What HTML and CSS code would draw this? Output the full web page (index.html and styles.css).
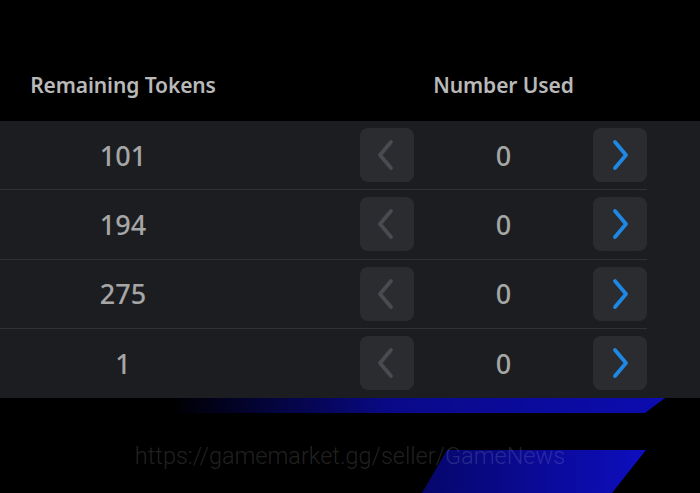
FILE: index.html
```html
<!DOCTYPE html>
<html>
<head>
<meta charset="utf-8">
<link rel="stylesheet" href="styles.css">
</head>
<body>
<div class="page">
  <div class="head">
    <div class="col-a">Remaining Tokens</div>
    <div class="col-gap"></div>
    <div class="col-b">Number Used</div>
  </div>
  <div class="table">
    <div class="row">
      <div class="col-a num">101</div>
      <div class="col-gap"></div>
      <div class="col-b stepper">
        <button class="btn"><svg viewBox="0 0 54 54" width="54" height="54"><path class="chev-off" d="M31 14 L20 27 L31 40"/></svg></button>
        <span class="num">0</span>
        <button class="btn"><svg viewBox="0 0 54 54" width="54" height="54"><path class="chev-on" d="M22 14 L33 27 L22 40"/></svg></button>
      </div>
    </div>
    <div class="row">
      <div class="col-a num">194</div>
      <div class="col-gap"></div>
      <div class="col-b stepper">
        <button class="btn"><svg viewBox="0 0 54 54" width="54" height="54"><path class="chev-off" d="M31 14 L20 27 L31 40"/></svg></button>
        <span class="num">0</span>
        <button class="btn"><svg viewBox="0 0 54 54" width="54" height="54"><path class="chev-on" d="M22 14 L33 27 L22 40"/></svg></button>
      </div>
    </div>
    <div class="row">
      <div class="col-a num">275</div>
      <div class="col-gap"></div>
      <div class="col-b stepper">
        <button class="btn"><svg viewBox="0 0 54 54" width="54" height="54"><path class="chev-off" d="M31 14 L20 27 L31 40"/></svg></button>
        <span class="num">0</span>
        <button class="btn"><svg viewBox="0 0 54 54" width="54" height="54"><path class="chev-on" d="M22 14 L33 27 L22 40"/></svg></button>
      </div>
    </div>
    <div class="row last">
      <div class="col-a num">1</div>
      <div class="col-gap"></div>
      <div class="col-b stepper">
        <button class="btn"><svg viewBox="0 0 54 54" width="54" height="54"><path class="chev-off" d="M31 14 L20 27 L31 40"/></svg></button>
        <span class="num">0</span>
        <button class="btn"><svg viewBox="0 0 54 54" width="54" height="54"><path class="chev-on" d="M22 14 L33 27 L22 40"/></svg></button>
      </div>
    </div>
  </div>
  <svg class="deco" viewBox="0 0 700 95" width="700" height="95">
    <defs>
      <linearGradient id="g1" x1="170" y1="0" x2="665" y2="0" gradientUnits="userSpaceOnUse">
        <stop offset="0" stop-color="#0a0a90" stop-opacity="0"/>
        <stop offset="0.45" stop-color="#0a0a98" stop-opacity="0.9"/>
        <stop offset="1" stop-color="#0c0cb0"/>
      </linearGradient>
      <linearGradient id="g2" x1="420" y1="0" x2="648" y2="0" gradientUnits="userSpaceOnUse">
        <stop offset="0" stop-color="#06066a"/>
        <stop offset="1" stop-color="#0e0ec0"/>
      </linearGradient>
    </defs>
    <polygon points="170,0 665,0 645,15 170,15" fill="url(#g1)"/>
    <polygon points="447,52 646,52 612,95 422,95" fill="url(#g2)"/>
  </svg>
  <div class="watermark">https://gamemarket.gg/seller/GameNews</div>
</div>
</body>
</html>
```

FILE: styles.css
```css
html, body {
  margin: 0;
  padding: 0;
  background: #000;
}
.page {
  position: relative;
  width: 700px;
  height: 493px;
  overflow: hidden;
  background: #000;
  font-family: "Noto Sans", "Open Sans", sans-serif;
}
.head {
  height: 121px;
  display: flex;
  align-items: flex-end;
  box-sizing: border-box;
  padding-bottom: 22px;
  color: #b9b9b9;
  font-size: 21px;
  font-weight: 600;
  letter-spacing: -0.1px;
}
.col-a {
  width: 246px;
  text-align: center;
  flex: none;
}
.col-gap {
  width: 114px;
  flex: none;
}
.col-b {
  width: 287px;
  text-align: center;
  flex: none;
}
.table {
  background: #1c1d20;
  height: 277px;
  display: flex;
  flex-direction: column;
}
.row {
  display: flex;
  align-items: center;
  height: 69.25px;
  width: 647px;
  box-sizing: border-box;
  border-bottom: 1px solid #303135;
}
.row.last {
  border-bottom: none;
}
.num {
  color: #a6a6a6;
  font-size: 27px;
  font-weight: 500;
}
.stepper {
  display: flex;
  align-items: center;
  justify-content: space-between;
}
.btn {
  width: 54px;
  height: 54px;
  padding: 0;
  border: none;
  border-radius: 8px;
  background: #2b2c30;
  display: flex;
  align-items: center;
  justify-content: center;
}
.btn svg {
  display: block;
}
.chev-off, .chev-on {
  fill: none;
  stroke-width: 3.8;
  stroke-linecap: round;
  stroke-linejoin: round;
}
.chev-off {
  stroke: #4a4b50;
}
.chev-on {
  stroke: #1e88e5;
}
.deco {
  position: absolute;
  left: 0;
  top: 398px;
  display: block;
}
.watermark {
  position: absolute;
  left: 0;
  right: 0;
  top: 442px;
  text-align: center;
  font-family: Roboto, "Noto Sans", sans-serif;
  font-weight: 300;
  font-size: 23.5px;
  color: rgba(255, 255, 255, 0.14);
}
```
